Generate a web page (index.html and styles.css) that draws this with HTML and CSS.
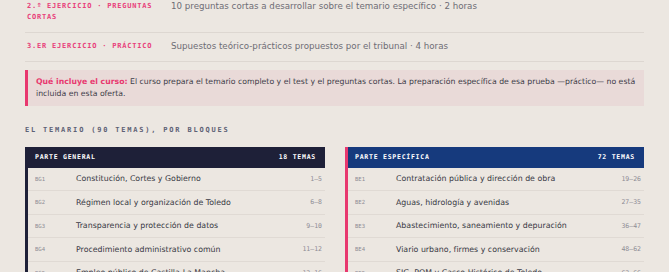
FILE: index.html
```html
<!DOCTYPE html>
<html lang="es">
<head>
<meta charset="utf-8">
<link rel="stylesheet" href="styles.css">
</head>
<body>
<div class="page">
  <div class="exams">
    <div class="exam-row">
      <div class="exam-label">2.º Ejercicio · Preguntas cortas</div>
      <div class="exam-desc">10 preguntas cortas a desarrollar sobre el temario específico · 2 horas</div>
    </div>
    <div class="exam-row">
      <div class="exam-label">3.er Ejercicio · Práctico</div>
      <div class="exam-desc">Supuestos teórico-prácticos propuestos por el tribunal · 4 horas</div>
    </div>
  </div>

  <div class="callout"><strong>Qué incluye el curso:</strong> El curso prepara el temario completo y el test y el preguntas cortas. La preparación específica de esa prueba —práctico— no está incluida en esta oferta.</div>

  <h2 class="section-title">El temario (90 temas), por bloques</h2>

  <div class="blocks">
    <div class="card card-general">
      <div class="card-head"><span>Parte general</span><span>18 temas</span></div>
      <div class="card-row"><span class="code">BG1</span><span class="title">Constitución, Cortes y Gobierno</span><span class="range">1–5</span></div>
      <div class="card-row"><span class="code">BG2</span><span class="title">Régimen local y organización de Toledo</span><span class="range">6–8</span></div>
      <div class="card-row"><span class="code">BG3</span><span class="title">Transparencia y protección de datos</span><span class="range">9–10</span></div>
      <div class="card-row"><span class="code">BG4</span><span class="title">Procedimiento administrativo común</span><span class="range">11–12</span></div>
      <div class="card-row"><span class="code">BG5</span><span class="title">Empleo público de Castilla-La Mancha</span><span class="range">13–16</span></div>
    </div>
    <div class="card card-specific">
      <div class="card-head"><span>Parte específica</span><span>72 temas</span></div>
      <div class="card-row"><span class="code">BE1</span><span class="title">Contratación pública y dirección de obra</span><span class="range">19–26</span></div>
      <div class="card-row"><span class="code">BE2</span><span class="title">Aguas, hidrología y avenidas</span><span class="range">27–35</span></div>
      <div class="card-row"><span class="code">BE3</span><span class="title">Abastecimiento, saneamiento y depuración</span><span class="range">36–47</span></div>
      <div class="card-row"><span class="code">BE4</span><span class="title">Viario urbano, firmes y conservación</span><span class="range">48–62</span></div>
      <div class="card-row"><span class="code">BE5</span><span class="title">SIG, POM y Casco Histórico de Toledo</span><span class="range">63–66</span></div>
    </div>
  </div>
</div>
</body>
</html>
```
FILE: styles.css
```css
html, body {
  margin: 0;
  padding: 0;
  background: #ece7e1;
}
body {
  font-family: "DejaVu Sans", Verdana, sans-serif;
  color: #3b3b46;
}
.page {
  width: 619px;
  margin: -7.5px 0 0 25px;
}
.exams {
  display: flex;
  flex-direction: column;
}
.exam-row {
  display: grid;
  grid-template-columns: 146px 1fr;
  padding: 8.5px 0 8.5px;
  border-bottom: 1px solid #ddd7d1;
  align-items: start;
}
.exam-label {
  padding-left: 2px;
  padding-right: 12px;
  font-family: "DejaVu Sans Mono", monospace;
  font-weight: bold;
  font-size: 7px;
  line-height: 11px;
  letter-spacing: 0.8px;
  text-transform: uppercase;
  color: #e8407a;
}
.exam-desc {
  font-size: 8.7px;
  line-height: 11px;
  color: #6e6d75;
}
.callout {
  margin-top: 8px;
  background: #e9dad8;
  border-left: 3px solid #e8386f;
  padding: 6px 2px 6px 8px;
  font-size: 7.75px;
  line-height: 12px;
  color: #3e3d48;
}
.callout strong {
  color: #e8386f;
}
.section-title {
  margin: 20px 0 12px;
  font-family: "DejaVu Sans Mono", monospace;
  font-weight: bold;
  font-size: 7px;
  line-height: 9px;
  letter-spacing: 1.8px;
  text-transform: uppercase;
  color: #5d6175;
}
.blocks {
  display: grid;
  grid-template-columns: 300px 299px;
  column-gap: 20px;
}
.card {
  display: flex;
  flex-direction: column;
}
.card-general {
  border-left: 3px solid #1e2038;
}
.card-specific {
  border-left: 3px solid #e8386f;
}
.card-head {
  display: flex;
  justify-content: space-between;
  align-items: center;
  height: 19px;
  padding: 0 8px 0 7px;
  font-family: "DejaVu Sans Mono", monospace;
  font-weight: bold;
  font-size: 6.5px;
  letter-spacing: 0.75px;
  text-transform: uppercase;
  color: #ffffff;
}
.card-general .card-head {
  background: #1e2038;
  border: 1px solid #1e2038;
  border-left: 0;
}
.card-specific .card-head {
  background: #163a7d;
  border: 1px solid #163a7d;
  border-left: 0;
}
.card-row {
  display: grid;
  grid-template-columns: 41px 1fr auto;
  align-items: center;
  height: 23.5px;
  padding: 0 3px 0 7px;
  border-bottom: 1px solid #e0dad4;
  box-sizing: border-box;
}
.code {
  font-family: "DejaVu Sans Mono", monospace;
  font-size: 5.6px;
  color: #8e8c95;
}
.title {
  font-size: 7.85px;
  color: #3a3a45;
}
.range {
  font-family: "DejaVu Sans Mono", monospace;
  font-size: 6.5px;
  color: #8e8c95;
}
```
